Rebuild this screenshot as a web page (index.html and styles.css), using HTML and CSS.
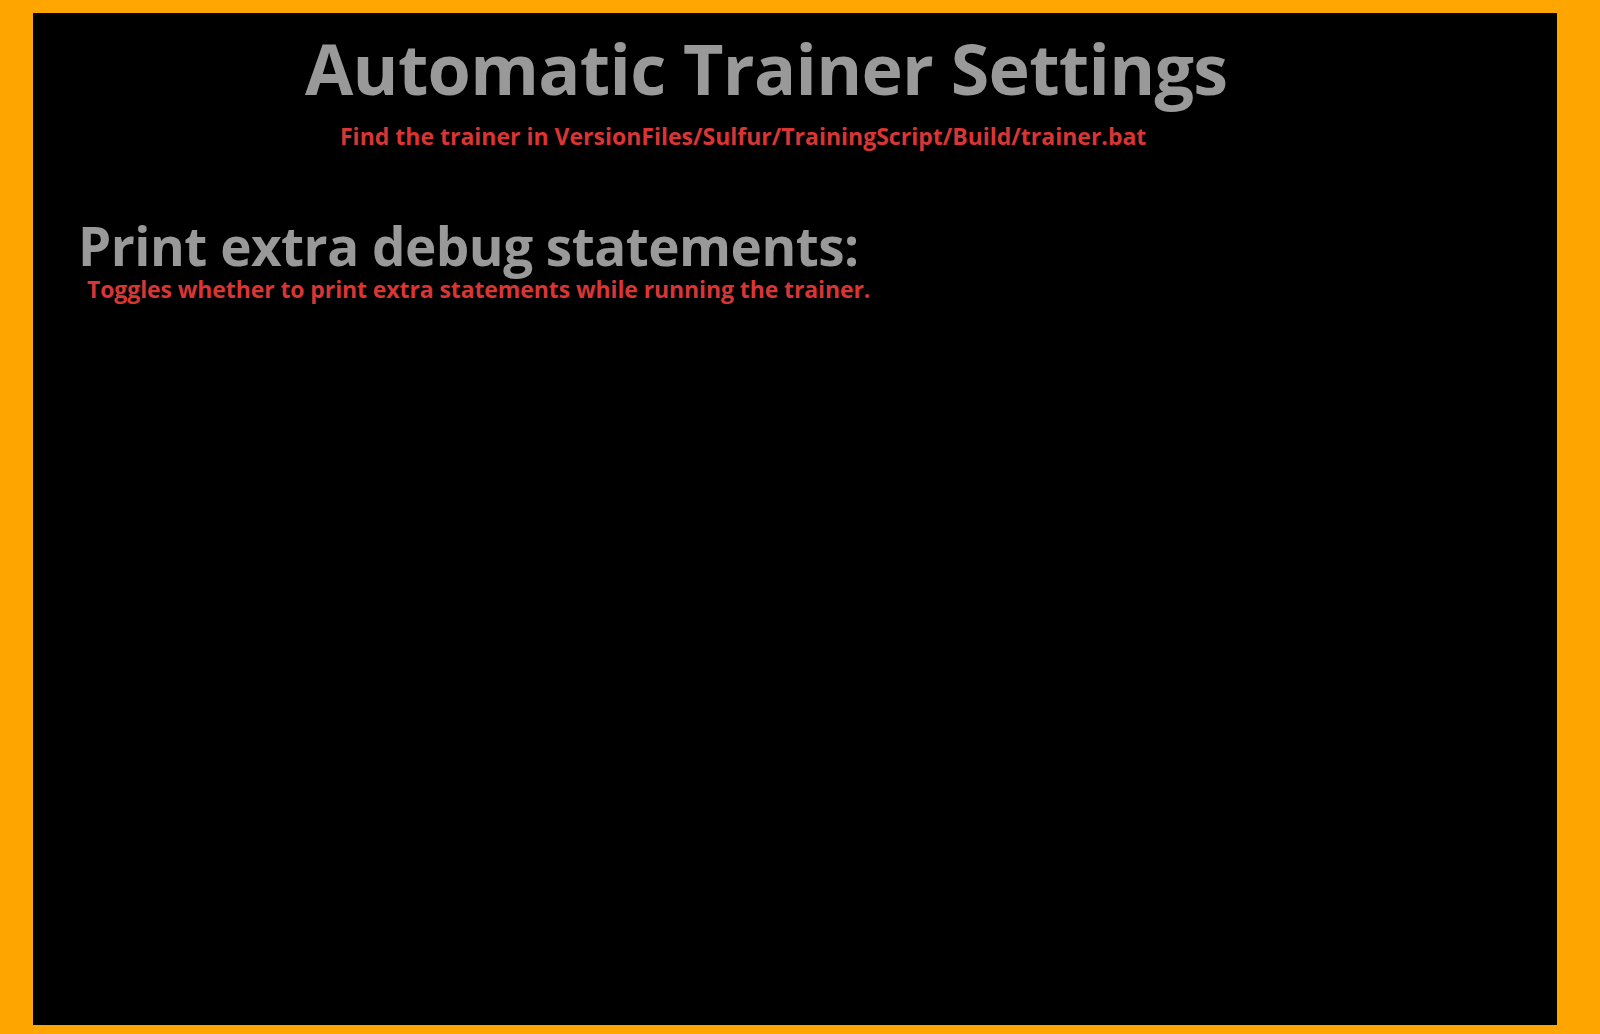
FILE: index.html
```html
<!DOCTYPE html>
<html>
<head>
<meta charset="utf-8">
<link rel="stylesheet" href="styles.css">
</head>
<body>
<div class="panel">
  <h1 class="title">Automatic Trainer Settings</h1>
  <p class="subtitle">Find the trainer in VersionFiles/Sulfur/TrainingScript/Build/trainer.bat</p>
  <div class="setting">
    <h2 class="setting-name">Print extra debug statements:</h2>
    <p class="setting-desc">Toggles whether to print extra statements while running the trainer.</p>
  </div>
</div>
</body>
</html>
```
FILE: styles.css
```css
html, body {
  margin: 0;
  padding: 0;
  background: #ffa500;
}
body {
  padding: 13px 43px 9px 33px;
  height: 1034px;
  box-sizing: border-box;
  font-family: "Open Sans", "Noto Sans", sans-serif;
  font-weight: 700;
}
.panel {
  background: #000;
  height: 1012px;
  overflow: hidden;
}
.title {
  margin: 0;
  padding: 10px 0 0 272px;
  font-size: 70px;
  line-height: 90px;
  letter-spacing: -0.7px;
  color: #999999;
  font-weight: 700;
}
.subtitle {
  margin: 0;
  padding: 6px 0 0 307px;
  font-size: 23px;
  line-height: 34px;
  color: #d93535;
}
.setting {
  padding: 63px 0 0 45px;
}
.setting-name {
  margin: 0;
  font-size: 53px;
  line-height: 60px;
  letter-spacing: -0.5px;
  color: #999999;
  font-weight: 700;
}
.setting-desc {
  margin: 0;
  padding-left: 9px;
  font-size: 23px;
  line-height: 26px;
  letter-spacing: -0.1px;
  color: #d93535;
}
```
